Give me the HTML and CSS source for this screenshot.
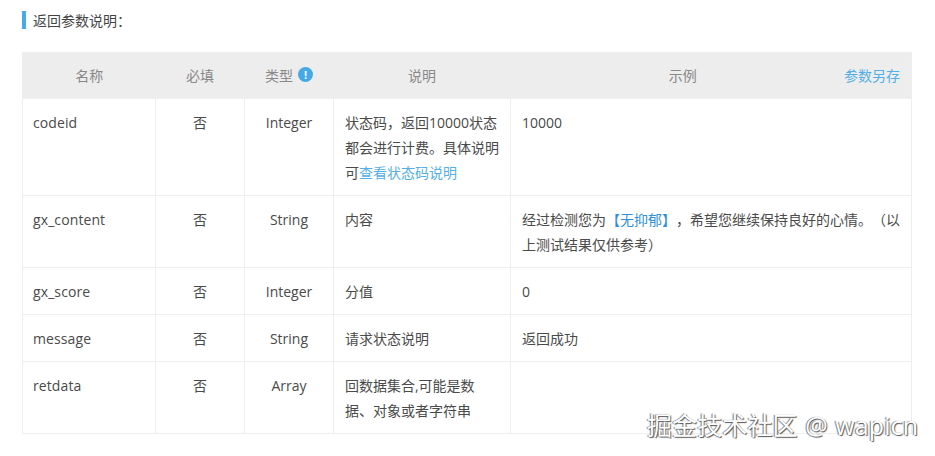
FILE: index.html
```html
<!DOCTYPE html>
<html lang="zh-CN">
<head>
<meta charset="utf-8">
<title>返回参数说明</title>
<link rel="stylesheet" href="styles.css">
</head>
<body>
<main class="page">
  <h2 class="heading">返回参数说明：</h2>
  <table class="params">
    <colgroup>
      <col class="c-name"><col class="c-req"><col class="c-type"><col class="c-desc"><col class="c-ex">
    </colgroup>
    <thead>
      <tr>
        <th>名称</th>
        <th>必填</th>
        <th>类型<span class="info">!</span></th>
        <th>说明</th>
        <th><a class="save" href="#">参数另存</a>示例</th>
      </tr>
    </thead>
    <tbody>
      <tr>
        <td>codeid</td><td class="mid">否</td><td class="mid">Integer</td>
        <td>状态码，返回10000状态都会进行计费。具体说明可<a href="#">查看状态码说明</a></td>
        <td>10000</td>
      </tr>
      <tr>
        <td>gx_content</td><td class="mid">否</td><td class="mid">String</td>
        <td>内容</td>
        <td>经过检测您为<span class="hl">【无抑郁】</span>，希望您继续保持良好的心情。（以上测试结果仅供参考）</td>
      </tr>
      <tr>
        <td>gx_score</td><td class="mid">否</td><td class="mid">Integer</td>
        <td>分值</td><td>0</td>
      </tr>
      <tr>
        <td>message</td><td class="mid">否</td><td class="mid">String</td>
        <td>请求状态说明</td><td>返回成功</td>
      </tr>
      <tr>
        <td>retdata</td><td class="mid">否</td><td class="mid">Array</td>
        <td>回数据集合,可能是数据、对象或者字符串</td><td></td>
      </tr>
    </tbody>
  </table>
</main>
<div class="watermark">掘金技术社区 @ wapicn</div>
</body>
</html>
```
FILE: styles.css
```css
* { box-sizing: border-box; }
html, body { margin: 0; padding: 0; background: #fff; }
body {
  width: 935px;
  height: 456px;
  overflow: hidden;
  position: relative;
  font-family: "Open Sans", "Noto Sans CJK SC", sans-serif;
  font-size: 14px;
  line-height: 25px;
  color: #4a4a4a;
  text-spacing-trim: space-all;
}
.page { padding: 11px 24px 0 22px; }
.heading {
  margin: 0 0 23px;
  height: 18px;
  padding-left: 7px;
  border-left: 4px solid #45ace8;
  font-size: 14px;
  font-weight: 400;
  line-height: 20px;
  color: #444;
}
.params {
  width: 889px;
  table-layout: fixed;
  border-collapse: collapse;
  border: 1px solid #eeeeee;
}
.c-name { width: 133px; }
.c-req { width: 89px; }
.c-type { width: 89px; }
.c-desc { width: 177px; }
.c-ex { width: 401px; }
.params th {
  height: 46px;
  padding: 0 11px;
  background: #eeeded;
  font-size: 14px;
  font-weight: 400;
  color: #888;
  text-align: center;
  border: 0;
}
.params td {
  padding: 11px 11px 10px;
  border: 1px solid #eeeeee;
  vertical-align: top;
  word-break: break-all;
}
.params td:first-child { padding-left: 10px; letter-spacing: 0.1px; }
.params td.mid { text-align: center; }
.info {
  display: inline-block;
  width: 15px;
  height: 15px;
  margin-left: 5px;
  border-radius: 50%;
  background: #45a9e6;
  color: #fff;
  font-size: 11px;
  font-weight: 700;
  line-height: 15px;
  text-align: center;
  vertical-align: 2px;
}
.save { float: right; }
a { color: #53afe6; text-decoration: none; }
.hl { color: #2f8fe0; }
.watermark {
  position: absolute;
  left: 647px;
  top: 407px;
  font-size: 25px;
  line-height: 36px;
  word-spacing: 1px;
  letter-spacing: 0.1px;
  white-space: nowrap;
  color: #fff;
  text-shadow: 1px 1px 1px #555, -1px 0 1px #777;
}
```
